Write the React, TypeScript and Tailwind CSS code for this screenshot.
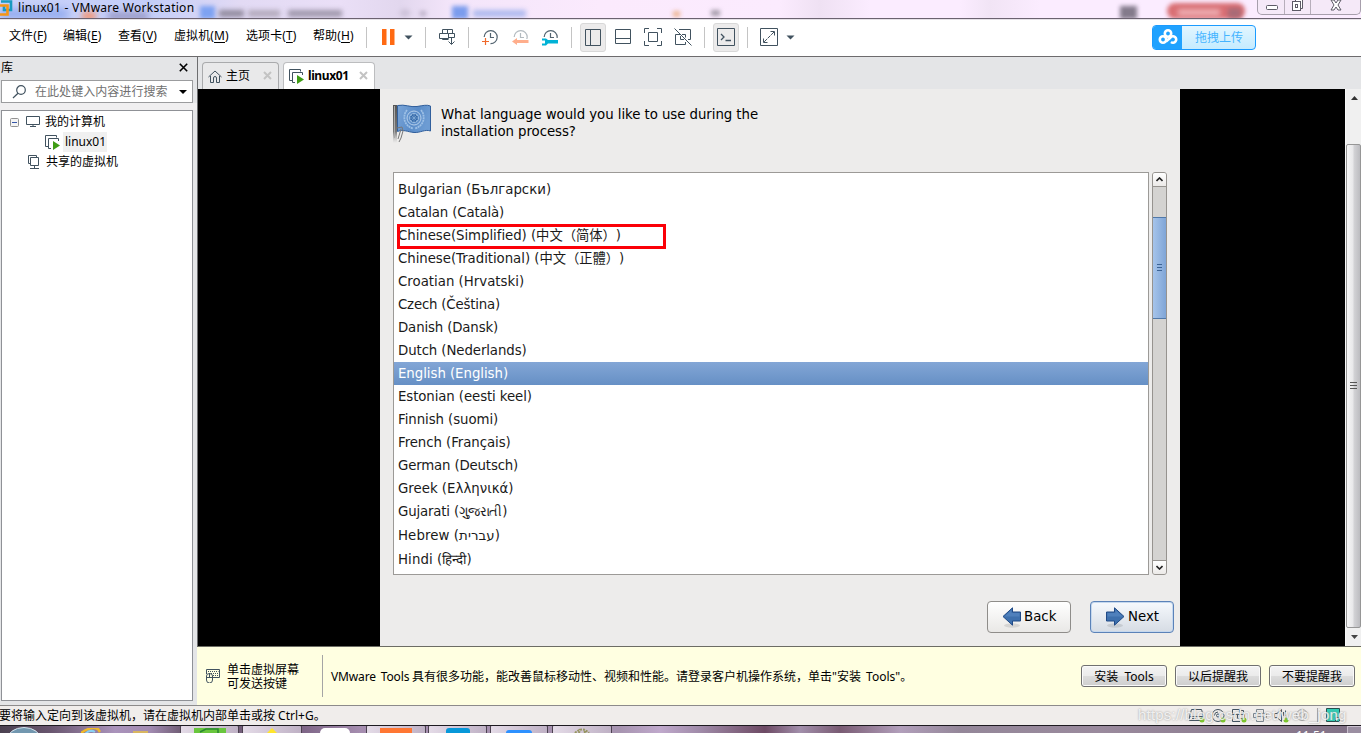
import type { ReactNode } from "react";

const UI = "font-['Noto_Sans','Noto_Sans_CJK_SC',sans-serif]";
const GUEST = "font-['DejaVu_Sans','Noto_Sans_CJK_SC',sans-serif]";

const INK = "#41525f";

const menus = [
  { label: "文件", key: "F", w: "w-[54px]" },
  { label: "编辑", key: "E", w: "w-[55px]" },
  { label: "查看", key: "V", w: "w-[56px]" },
  { label: "虚拟机", key: "M", w: "w-[72px]" },
  { label: "选项卡", key: "T", w: "w-[67px]" },
  { label: "帮助", key: "H", w: "w-[53px]" },
];

const languages = [
  { name: "Bulgarian (Български)", style: "h-[23px]" },
  { name: "Catalan (Català)", style: "h-[23px] tracking-[-0.15px]" },
  { name: "Chinese(Simplified) (中文（简体）)", style: "h-[23px] tracking-[-0.05px]" },
  { name: "Chinese(Traditional) (中文（正體）)", style: "h-[23px] tracking-[-0.05px]" },
  { name: "Croatian (Hrvatski)", style: "h-[23px]" },
  { name: "Czech (Čeština)", style: "h-[23px] tracking-[-0.2px]" },
  { name: "Danish (Dansk)", style: "h-[23px] tracking-[-0.15px]" },
  { name: "Dutch (Nederlands)", style: "h-[23px] tracking-[-0.1px]" },
  { name: "English (English)", style: "h-[23px] tracking-[-0.05px]" },
  { name: "Estonian (eesti keel)", style: "h-[23px] tracking-[-0.1px]" },
  { name: "Finnish (suomi)", style: "h-[23px] tracking-[-0.07px]" },
  { name: "French (Français)", style: "h-[23px] tracking-[-0.07px]" },
  { name: "German (Deutsch)", style: "h-[23px] tracking-[-0.17px]" },
  { name: "Greek (Ελληνικά)", style: "h-[23px]" },
  { name: "Gujarati (ગુજરાતી)", style: "h-[23px] tracking-[-0.17px]" },
  { name: "Hebrew (עברית)", style: "h-[24px] pt-px tracking-[0.08px]" },
  { name: "Hindi (हिन्दी)", style: "h-[24px] pt-px tracking-[0.08px]" },
];

function Icon({ w, h, className = "", children }: { w: number; h: number; className?: string; children: ReactNode }) {
  return (
    <svg width={w} height={h} viewBox={`0 0 ${w} ${h}`} className={`block shrink-0 ${className}`} fill="none" stroke={INK}>
      {children}
    </svg>
  );
}

function Separator({ className }: { className: string }) {
  return <div className={`h-[21px] w-px shrink-0 bg-[#c4c4c4] ${className}`} />;
}

function Caret({ className }: { className: string }) {
  return (
    <Icon w={9} h={5} className={className}>
      <path d="M0.5 0.5H8.5L4.5 4.5Z" fill={INK} stroke="none" />
    </Icon>
  );
}

function VmIcon({ className = "" }: { className?: string }) {
  return (
    <Icon w={15} h={15} className={className}>
      <path d="M11.5 2.5V0.5H0.5V11.5H3" />
      <path d="M13.5 6V3.5H3.5V13.5H6" />
      <path d="M8 6L15 10.5L8 15Z" fill="#3f9c14" stroke="none" />
    </Icon>
  );
}

function Clock({ color }: { color: string }) {
  return (
    <g stroke={color}>
      <path d="M2.2 8A6.5 6.5 0 1 1 8.5 14.6" strokeWidth="1.2" />
      <path d="M8.5 4V8.5H12" strokeWidth="1.2" />
    </g>
  );
}

function TitleBar() {
  return (
    <div className="relative flex h-[20px] shrink-0 overflow-hidden border-b border-[#e6e2e8] bg-[linear-gradient(90deg,#cbd3fa_0,#c3cdf8_150px,#e2daf4_240px,#eadff7_340px,#e2d7ee_400px,#f3e5fa_450px,#fbeafd_600px,#fbebfe_780px,#efe1f3_820px,#fbecff_870px,#fbecff_960px,#f1e4f5_990px,#fbecff_1040px,#fbecff_1361px)]">
      <div className="absolute left-0 top-[9px] h-[10px] w-[68px] bg-[#8fa8ee] blur-[4px]" />
      <div className="absolute left-[82px] top-[12px] h-[8px] w-[14px] bg-[#f5936f] blur-[3px]" />
      <div className="absolute left-[108px] top-[12px] h-[8px] w-[40px] bg-[#9a9bc8] blur-[3px]" />
      <div className="absolute left-[200px] top-[6px] h-[13px] w-[15px] bg-[#7ea2f2] blur-[2px]" />
      <div className="absolute left-[219px] top-[10px] h-[7px] w-[25px] bg-[#918a9d] blur-[2.5px]" />
      <div className="absolute left-[248px] top-[10px] h-[7px] w-[32px] bg-[#b3aabc] blur-[2.5px]" />
      <div className="absolute left-[288px] top-[10px] h-[7px] w-[54px] bg-[#9f97ab] blur-[2.5px]" />
      <div className="absolute left-[400px] top-[9px] h-[8px] w-[10px] rounded-full bg-[#cfc4da] blur-[2px]" />
      <div className="absolute left-[420px] top-[11px] h-[5px] w-[6px] bg-[#b9aec6] blur-[2px]" />
      <div className="absolute left-[452px] top-[6px] h-[13px] w-[16px] bg-[#7b9ced] blur-[2px]" />
      <div className="absolute left-[473px] top-[10px] h-[7px] w-[53px] bg-[#adb9ee] blur-[2.5px]" />
      <div className="absolute left-[673px] top-[11px] h-[6px] w-[7px] bg-[#eeb794] blur-[2px]" />
      <div className="absolute left-[711px] top-[10px] h-[6px] w-[9px] bg-[#a69dab] blur-[2px]" />
      <div className="absolute left-[1120px] top-[6px] h-[13px] w-[17px] bg-[#837a8b] blur-[2px]" />
      <div className="absolute left-[1167px] top-[3px] h-[16px] w-[78px] rounded-full bg-[#d96f74] blur-[2px]" />
      <div className="absolute left-[1178px] top-[9px] h-[7px] w-[42px] bg-[#edabb0] blur-[2.5px]" />
      <div className="absolute left-[1228px] top-[8px] h-[10px] w-[13px] bg-[#a96a76] blur-[2px]" />
      <Icon w={14} h={17} className="relative">
        <path d="M1 1.5H11V10H4V6" stroke="#1a9ac0" strokeWidth="2.6" />
        <path d="M-1 5.5H7.5V14.5H-1" stroke="#f59516" strokeWidth="2.6" />
      </Icon>
      <div className="relative ml-[4px] h-[17px] whitespace-nowrap text-[12px] leading-[15px] tracking-[0.28px] text-black">linux01 - VMware Workstation</div>
      <div className="relative ml-auto flex h-[15px] w-[104px] shrink-0 rounded-b-[5px] border border-t-0 border-[#a79fac] bg-[#f5e9f8]">
        <div className="flex w-[27px] justify-center border-r border-[#b7aebb] pl-px">
          <Icon w={12} h={14}>
            <rect x="0.5" y="5.5" width="11" height="4" rx="1" fill="#fff" stroke="#5d5a66" />
          </Icon>
        </div>
        <div className="flex w-[26px] justify-center border-r border-[#b7aebb]">
          <Icon w={12} h={14}>
            <path d="M3.5 1.5V-1H10.5V8.5H9" fill="#fff" stroke="#5d5a66" />
            <rect x="0.5" y="1.5" width="8" height="9" fill="#fff" stroke="#5d5a66" />
            <rect x="3.5" y="4.5" width="2" height="3" stroke="#5d5a66" />
          </Icon>
        </div>
        <div className="flex flex-1 pl-[19px]">
          <Icon w={12} h={14}>
            <path d="M1 0H4L6 3L8 0H11L8 5L11 10H8L6 7L4 10H1L4 5Z" fill="#fff" stroke="#5d5a66" />
          </Icon>
        </div>
      </div>
      <div className="absolute left-0 top-[18px] h-px w-full bg-[#6b6270]" />
    </div>
  );
}

function Toolbar() {
  return (
    <div className="flex h-[37px] shrink-0 items-center border-b border-[#6d6b6d] bg-white pb-[2px] pl-[9px]">
      {menus.map((m) => (
        <div key={m.key} className={`shrink-0 whitespace-nowrap pb-[2px] text-[12px] leading-[16px] tracking-[0.1px] text-black ${m.w}`}>
          {m.label}(<span className="underline underline-offset-2">{m.key}</span>)
        </div>
      ))}
      <Separator className="" />
      <Icon w={13} h={16} className="ml-[15px]">
        <path d="M0 0H4.5V16H0ZM8 0H12.5V16H8Z" fill="#ff6a13" stroke="none" />
      </Icon>
      <Caret className="ml-[9px]" />
      <Separator className="ml-[12px]" />
      <Icon w={18} h={18} className="ml-[13px]">
        <path d="M3.5 5.5V1.500H13.500V5.500M8.500 5.500V1.500M0.500 5.500H9.500V10.500H0.500ZM9.500 5.500H15.500V9.500H9.500M3.500 10.500V11.500H9.500M12.500 9.500V16M9.500 13.500L12.500 16.500L15.500 13.500" />
      </Icon>
      <Separator className="ml-[11px]" />
      <Icon w={17} h={17} className="ml-[13px]">
        <Clock color="#536470" />
        <path d="M4.500 8V16M0 12.500H9" stroke="#fff" strokeWidth="3" />
        <path d="M3.500 9V16M0 12.500H7" stroke="#f0692a" strokeWidth="1.200" />
      </Icon>
      <Icon w={17} h={17} className="ml-[13px]">
        <Clock color="#b3bbc0" />
        <path d="M0 10H17V17H0Z" fill="#fff" stroke="none" />
        <path d="M0 12.500L5 9V11H16.500V14H5V16Z" fill="#ffae8c" stroke="none" />
      </Icon>
      <Icon w={17} h={17} className="ml-[13px]">
        <Clock color="#536470" />
        <path d="M0 9H17V17H0Z" fill="#fff" stroke="none" />
        <path d="M0 9.500H4L6 11H16V14.500H6L4 16.500H0V14.500H3V11.500H0Z" fill="#00b2d6" stroke="none" />
      </Icon>
      <Separator className="ml-[12px]" />
      <div className="ml-[8px] flex h-[29px] w-[26px] shrink-0 items-center justify-center rounded-[3px] border border-[#d8d8d8] bg-[#ecebeb]">
        <Icon w={16} h={17}>
          <path d="M0.500 0.500H15.500V16.500H0.500ZM5.500 0.500V16.500" />
        </Icon>
      </div>
      <Icon w={16} h={16} className="ml-[9px]">
        <path d="M0.500 0.500H15.500V14.500H0.500ZM0.500 9.500H15.500" />
      </Icon>
      <Icon w={18} h={18} className="ml-[13px]">
        <path d="M0.500 5V0.500H5M13 0.500H17.500V5M17.500 13V17.500H13M5 17.500H0.500V13M4.500 4.500H13.500V13.500H4.500Z" />
      </Icon>
      <Icon w={18} h={18} className="ml-[12px]">
        <path d="M5 1.500H16.500V11.500H14M6.500 6.500H1.500V16.500H11.500V14M8 6.500H11.500V9.500M6.500 8V11.500H10M0.500 0.500L17.500 17.500" />
      </Icon>
      <Separator className="ml-[12px]" />
      <div className="ml-[8px] flex h-[29px] w-[26px] shrink-0 items-center justify-center rounded-[3px] border border-[#d8d8d8] bg-[#ecebeb]">
        <Icon w={18} h={18}>
          <path d="M0.500 0.500H17.500V17.500H0.500Z" />
          <path d="M4 6L7 9L4 12M8.500 12.500H14" strokeWidth="1.300" />
        </Icon>
      </div>
      <Separator className="ml-[8px]" />
      <Icon w={18} h={18} className="ml-[12px]">
        <path d="M0.500 0.500H17.500V17.500H0.500ZM10.500 3.500H14.500V7.500M3.500 10.500V14.500H7.500" />
        <path d="M14 4L4 14" strokeDasharray="4 1" />
      </Icon>
      <Caret className="ml-[8px]" />
      <div className="ml-auto mr-[105px] flex h-[25px] w-[104px] shrink-0 overflow-hidden rounded-[4px] border border-[#1b9bff] bg-gradient-to-b from-[#e2f6ff] to-[#c5ebff]">
        <div className="flex w-[29px] items-center justify-center bg-[#20a2ff]">
          <Icon w={20} h={18}>
            <g stroke="#fff" strokeWidth="2.600">
              <circle cx="10" cy="5.500" r="3.200" />
              <circle cx="5" cy="11.500" r="3.200" />
              <path d="M8 13.500L12.500 9.500A3.200 3.200 0 1 1 13 14" />
            </g>
          </Icon>
        </div>
        <div className="flex flex-1 items-center justify-center whitespace-nowrap pl-[1px] pt-[2px] text-[12px] text-[#45b4ff]">拖拽上传</div>
      </div>
    </div>
  );
}

function Library() {
  return (
    <div className="flex w-[197px] shrink-0 flex-col bg-[#e4e5e7] pb-[4px]">
      <div className="flex h-[23px] items-center justify-between pl-[1px] pr-[9px] text-[12px] text-black">
        <span className="pb-[2px]">库</span>
        <Icon w={9} h={9} className="mb-[2px]">
          <path d="M0.800 0.800L8.200 8.200M8.200 0.800L0.800 8.200" stroke="#000" strokeWidth="1.600" />
        </Icon>
      </div>
      <div className="ml-px flex h-[23px] w-[192px] items-center border border-[#9b9c9e] bg-white pl-[10px] pr-[5px]">
        <Icon w={15} h={14}>
          <circle cx="9" cy="5" r="4.300" strokeWidth="1.200" />
          <path d="M6 8.300L1 13" strokeWidth="1.200" />
        </Icon>
        <span className="ml-[8px] whitespace-nowrap text-[12px] leading-[18px] tracking-[0.05px] text-[#707070]">在此处键入内容进行搜索</span>
        <Icon w={8} h={4} className="ml-auto">
          <path d="M0 0H8L4 4Z" fill="#000" stroke="none" />
        </Icon>
      </div>
      <div className="h-[7px] bg-[#f0eff0]" />
      <div className="ml-px w-[192px] flex-1 border border-[#8f9196] bg-white text-[12px] text-black">
        <div className="flex h-[21px] items-center pl-[8px]">
          <Icon w={9} h={9} className="mt-[2px]">
            <rect x="0.500" y="0.500" width="8" height="8" rx="1" fill="#f4f4f4" stroke="#929292" />
            <path d="M2 4.500H7" stroke="#3556a8" />
          </Icon>
          <Icon w={14} h={12} className="ml-[7px] mt-px">
            <path d="M0.500 0.500H13.500V8.500H0.500ZM7 9V10M4 10.500H10" />
          </Icon>
          <span className="ml-[5px]">我的计算机</span>
        </div>
        <div className="flex h-[20px] items-center pl-[43px]">
          <VmIcon />
          <span className="ml-[3px] flex h-[20px] w-[44px] items-center bg-[#f0f0f0] pl-[2px]">linux01</span>
        </div>
        <div className="flex h-[20px] items-center pl-[26px]">
          <Icon w={13} h={14}>
            <path d="M3 8.500H0.500V0.500H8.500V2M2.500 2.500H10.500V10.500H2.500ZM6.500 10.500V13M2 13.500H11" />
          </Icon>
          <span className="ml-[5px]">共享的虚拟机</span>
        </div>
      </div>
    </div>
  );
}

function CloseMark({ className }: { className: string }) {
  return (
    <Icon w={9} h={9} className={className}>
      <path d="M1 1L8 8M8 1L1 8" stroke="#c3c3c3" strokeWidth="2" />
    </Icon>
  );
}

function Tabs() {
  return (
    <div className="flex h-[32px] shrink-0 items-end bg-[#e4e5e7] pl-[4px]">
      <div className="flex h-[27px] w-[77px] items-center rounded-t-[4px] border border-b-0 border-[#a9aaac] bg-[#e9e9ea] pl-[5px] text-[12px] text-black">
        <Icon w={14} h={14} className="mt-[2px]">
          <path d="M0.500 7L7 1L13.500 7M2.500 6V12.500H5.500V8A1.500 1.500 0 0 1 8.500 8V12.500H11.500V6" />
        </Icon>
        <span className="ml-[4px]">主页</span>
        <CloseMark className="mb-[2px] ml-auto mr-[6px]" />
      </div>
      <div className="ml-[4px] flex h-[27px] w-[92px] items-center rounded-t-[4px] border border-b-0 border-[#bcbdbf] bg-white pl-[5px] text-[12px] font-bold text-black">
        <VmIcon className="mt-px" />
        <span className="ml-[4px] tracking-[-0.400px]">linux01</span>
        <CloseMark className="mb-[2px] ml-auto mr-[6px]" />
      </div>
    </div>
  );
}

function Flag() {
  return (
    <svg width="40" height="40" viewBox="0 0 40 40" className="block shrink-0" fill="none">
      <defs>
        <linearGradient id="pole" x1="0" y1="0" x2="0" y2="1">
          <stop offset="0" stopColor="#555" />
          <stop offset="0.7" stopColor="#777" />
          <stop offset="1" stopColor="#aaa" stopOpacity="0" />
        </linearGradient>
        <linearGradient id="cloth" x1="0" y1="0" x2="1" y2="0.3">
          <stop offset="0" stopColor="#7aa5d8" />
          <stop offset="0.6" stopColor="#5a8cc8" />
          <stop offset="1" stopColor="#6d9cd3" />
        </linearGradient>
      </defs>
      <rect x="0" y="1" width="4" height="38" fill="url(#pole)" />
      <rect x="1" y="2" width="1" height="32" fill="#aaa" />
      <path d="M4.500 1.500C12 0 17 3.500 24 2.500C30 1.500 34 0.500 37.500 2V27C32 25 27 29 21 28.500C15 28 10 25 4.500 27.500Z" fill="url(#cloth)" stroke="#315f9c" />
      <circle cx="21" cy="14" r="7" stroke="#b5cfeb" />
      <circle cx="21" cy="14" r="4.500" fill="#3468a8" stroke="#9fc1e4" />
      <path d="M21 9V19M16 14H26M17.500 10.500L24.500 17.500M24.500 10.500L17.500 17.500" stroke="#8eb5de" strokeWidth="0.600" />
      <path d="M14 6C9 12 11 22 20 24.500M28 6C33 12 31 22 22 24.500" stroke="#9dc0e6" strokeWidth="1.800" strokeDasharray="2 0.600" />
      <path d="M4 24L9 23L10 27L8 34L6 38M8 25L5 35" stroke="#777" />
    </svg>
  );
}

function Arrow({ right = false }: { right?: boolean }) {
  return (
    <svg width="20" height="21" viewBox="0 0 20 21" className={`block shrink-0 ${right ? "-scale-x-100" : ""}`}>
      <ellipse cx="10" cy="18.500" rx="8" ry="2.200" fill="#000" opacity="0.100" />
      <path d="M1 9.500L10.500 0.800V5H18.500V14H10.500V18.200Z" fill="#3e70ad" stroke="#204a87" />
      <path d="M2.500 9.500L9.500 3V6H17.500V9.500Z" fill="#4f80bc" />
    </svg>
  );
}

function ListScrollbar() {
  return (
    <div className="ml-[3px] flex h-[403px] w-[15px] flex-col overflow-hidden rounded-[3px] border border-[#96938f] bg-[#d4d3d1]">
      <div className="flex h-[14px] shrink-0 items-center justify-center border-b border-[#96938f] bg-gradient-to-b from-white to-[#eceae8]">
        <Icon w={7} h={5}>
          <path d="M0.500 4L3.500 1L6.500 4" stroke="#222" strokeWidth="1.600" />
        </Icon>
      </div>
      <div className="-mx-px mt-[30px] flex h-[102px] shrink-0 items-center justify-center border border-[#5078a8] bg-[linear-gradient(90deg,#a6c4ea,#7fa5d7)] pb-px">
        <Icon w={5} h={7}>
          <path d="M0 0.500H5M0 3.500H5M0 6.500H5" stroke="#3c6496" />
        </Icon>
      </div>
      <div className="mt-auto flex h-[14px] shrink-0 items-center justify-center border-t border-[#96938f] bg-gradient-to-b from-white to-[#eceae8]">
        <Icon w={7} h={5}>
          <path d="M0.500 1L3.500 4L6.500 1" stroke="#222" strokeWidth="1.600" />
        </Icon>
      </div>
    </div>
  );
}

function Installer() {
  return (
    <div className={`flex w-[800px] shrink-0 flex-col bg-[#edeceb] text-[13.33px] text-[#1a1a1a] ${GUEST}`}>
      <div className="flex h-[83px] shrink-0 pl-[13px] pt-[15px]">
        <Flag />
        <p className="ml-[8px] mt-[2px] leading-[17px] tracking-[-0.06px] text-black">
          What language would you like to use during the
          <br />
          installation process?
        </p>
      </div>
      <div className="flex h-[403px] shrink-0 pl-[13px]">
        <div className="relative w-[756px] border border-[#9c9a97] bg-white pt-[5px]">
          {languages.map((l) => (
            <div
              key={l.name}
              className={`flex items-center whitespace-nowrap pl-[4px] leading-[22px] [text-spacing-trim:space-all] ${l.style} ${
                l.name.startsWith("English") ? "bg-gradient-to-b from-[#83a6d6] to-[#6690c5] text-white" : ""
              }`}
            >
              <span>{l.name}</span>
            </div>
          ))}
          <div className="absolute left-[3px] top-[51px] h-[25px] w-[269px] border-[3px] border-[#fb0007]" />
        </div>
        <ListScrollbar />
      </div>
      <div className="flex justify-end gap-[19px] pr-[6px] pt-[26px] text-black">
        <div className="flex h-[32px] w-[84px] items-center rounded-[4px] border border-[#8f8d8a] bg-gradient-to-b from-white to-[#e9e8e6] pl-[14px]">
          <Arrow />
          <span className="ml-[2px] pb-[1px]">Back</span>
        </div>
        <div className="flex h-[32px] w-[84px] items-center rounded-[4px] border border-[#5b82b8] bg-gradient-to-b from-[#f6f9fd] to-[#d6dce4] pl-[14px] shadow-[inset_0_0_0_1px_#c5d8ee]">
          <Arrow right />
          <span className="ml-[3px] pb-[1px]">Next</span>
        </div>
      </div>
    </div>
  );
}

function OuterScrollbar() {
  return (
    <div className="flex w-[16px] shrink-0 flex-col border-l border-[#f8f8f8] bg-[#f0f0f0]">
      <div className="flex h-[17px] items-center pl-[5px]">
        <Icon w={7} h={4}>
          <path d="M0 4L3.500 0L7 4Z" fill="#333" stroke="none" />
        </Icon>
      </div>
      <div className="mt-[38px] flex h-[484px] w-[15px] items-center justify-center rounded-[2px] border border-[#969696] bg-[linear-gradient(90deg,#f6f6f6_0%,#e8e8ea_45%,#d2d2d5_55%,#bcbcc0_100%)]">
        <Icon w={7} h={8}>
          <path d="M0 0.500H7M0 3.500H7M0 6.500H7" stroke="#555" />
        </Icon>
      </div>
      <div className="flex h-[18px] items-center pl-[5px]">
        <Icon w={7} h={4}>
          <path d="M0 0H7L3.500 4Z" fill="#444" stroke="none" />
        </Icon>
      </div>
    </div>
  );
}

function NoticeButton({ label }: { label: string }) {
  return (
    <div className="flex h-[22px] w-[86px] items-center justify-center whitespace-pre rounded-[3px] border border-[#707070] bg-[linear-gradient(180deg,#f3f3f3_0%,#ebebeb_48%,#dcdcdc_52%,#cecece_100%)] pt-px text-[12px] leading-[18px] text-black shadow-[inset_0_0_0_1px_#fafafa]">
      {label}
    </div>
  );
}

function Notice() {
  return (
    <div className="-ml-px flex h-[59px] shrink-0 items-center border-t border-[#6c6c64] bg-[#ffffe1] text-[12px] text-black">
      <Icon w={15} h={15} className="mb-px ml-[8px]">
        <path d="M1.500 6V1.500H14.500V9.500H8" />
        <path d="M3 3.500H13.500M4 5.500H13.500M8 7.500H13" strokeDasharray="1 1" />
        <path d="M1.500 8A3 2.500 0 0 1 7.500 8V12A3 3 0 0 1 1.500 12ZM1.500 9.500H7.500M4.500 5.500V9.500" />
      </Icon>
      <div className="ml-[7px] w-[95px] whitespace-nowrap pt-[2px] leading-[14px]">
        单击虚拟屏幕
        <br />
        可发送按键
      </div>
      <div className="h-[42px] w-px bg-[#a5a5a5]" />
      <div className="ml-[8px] whitespace-nowrap pt-[2px]">
        <span className="inline-block w-[81px] whitespace-nowrap tracking-[-0.15px] [word-spacing:2px]">VMware Tools</span>
        具有很多功能，能改善鼠标移动性、视频和性能。请登录客户机操作系统，单击
        <span className="font-['Noto_Sans',sans-serif]">"</span>安装 <span className="ml-[2px]">Tools</span>
        <span className="font-['Noto_Sans',sans-serif]">"</span>。
      </div>
      <div className="ml-auto mr-[6px] flex gap-[8px]">
        <NoticeButton label="安装  Tools" />
        <NoticeButton label="以后提醒我" />
        <NoticeButton label="不要提醒我" />
      </div>
    </div>
  );
}

function Dot({ x = 12, y = 12 }: { x?: number; y?: number }) {
  return <circle cx={x} cy={y} r="2.500" fill="#7bc829" stroke="none" />;
}

function StatusBar() {
  return (
    <div className="relative flex h-[20px] shrink-0 items-center border-t border-[#8d8b8b] bg-[#f0edeb] text-[12px] text-black">
      <span className="-ml-[1px] whitespace-nowrap pt-px">要将输入定向到该虚拟机，请在虚拟机内部单击或按 Ctrl+G。</span>
      <div className="ml-auto mr-[20px] flex items-center">
        <Icon w={16} h={15}>
          <path d="M2.500 1.500H12.500L14.500 8.500V12.500H0.500V8.500ZM0.500 8.500H14.500M3 10.500H7" />
          <Dot x={13} />
        </Icon>
        <Icon w={15} h={15} className="ml-[6px]">
          <circle cx="7" cy="7.500" r="6" />
          <circle cx="7" cy="7.500" r="1.500" />
          <path d="M3.500 7.500A3.500 3.500 0 0 1 7 4" />
          <Dot />
        </Icon>
        <Icon w={15} h={15} className="ml-[6px]">
          <path d="M0.500 1.500H7.500V6.500H0.500ZM5.500 6.500H12.500V10.500H5.500ZM9 2.500H11.500V6M0.500 9V13.500H8" />
          <Dot />
        </Icon>
        <Icon w={15} h={15} className="ml-[6px]">
          <path d="M3.500 5V1.500H10.500V5M3.500 9.500H0.500V5.500H13.500V9.500H10.500M3.500 8.500H10.500V13.500H3.500Z" stroke="#7b868e" />
        </Icon>
        <Icon w={15} h={15} className="ml-[6px]">
          <path d="M0.500 5.500H3L7.500 1.500V13.500L3 9.500H0.500ZM9.500 4V8M11.500 2.500V8" />
          <Dot />
        </Icon>
        <Icon w={15} h={15} className="ml-[6px]">
          <circle cx="7" cy="7" r="5.500" stroke="#a6a6a6" />
          <circle cx="7" cy="7" r="2.500" stroke="#a6a6a6" />
        </Icon>
        <div className="ml-[7px] h-[15px] w-px bg-[#a6a6a6]" />
        <Icon w={15} h={15} className="ml-[8px]">
          <path d="M0.500 0.500H13.500V13.500H0.500Z" fill="#30cdb5" stroke="#27514e" />
          <path d="M9.500 13.500V9.500H13.500" fill="#f0edeb" stroke="#27514e" />
        </Icon>
      </div>
      <div className="absolute left-[1138px] top-0 whitespace-nowrap font-['Liberation_Sans',sans-serif] text-[15px] leading-[18px] tracking-[0.2px] text-white/80 [text-shadow:0_0_2px_#8a8a8a]">
        https://blog.csdn.net/web_jong
      </div>
    </div>
  );
}

function Task({ w, ml, children }: { w: string; ml: string; children: ReactNode }) {
  return (
    <div className={`flex h-[8px] shrink-0 items-end justify-center overflow-hidden rounded-t-[2px] border border-b-0 border-[#4c4250] bg-gradient-to-r from-[#e4dbe7] to-[#bfb1c5] ${w} ${ml}`}>
      {children}
    </div>
  );
}

function Taskbar() {
  return (
    <div className="relative flex h-[8px] shrink-0 items-end overflow-hidden border-t border-[#1d1a20] bg-[linear-gradient(90deg,#4b4150_0,#68556e_50px,#aa93bb_115px,#a28bb1_150px,#6a586e_185px,#7c6385_300px,#a58daf_360px,#a794b0_620px,#c0a9cc_660px,#a08ba9_700px,#6d4a64_765px,#a28fab_800px,#795b73_840px,#b29fbb_900px,#948799_960px,#9a8a9d_1100px,#817186_1361px)]">
      <Icon w={32} h={6} className="ml-[8px]">
        <ellipse cx="16" cy="13" rx="17" ry="12.500" fill="#7297af" stroke="#d6e4ed" />
      </Icon>
      <Icon w={20} h={5} className="ml-[41px]">
        <path d="M0 5Q10 -2 17 1L19 4" stroke="#f0b928" strokeWidth="2.500" />
        <path d="M4 6Q9 1 14 4" stroke="#8bd1f3" strokeWidth="2" />
      </Icon>
      <div className="ml-[32px] h-[2px] w-[15px] shrink-0 bg-[#d8b660]" />
      <Task w="w-[59px]" ml="ml-[32px]">
        <Icon w={32} h={5}>
          <path d="M0 0H32V5H0Z" fill="#69c63d" stroke="none" />
          <path d="M6 4L12 1H24V5" stroke="#298730" strokeWidth="1.500" />
        </Icon>
      </Task>
      <Task w="w-[60px]" ml="ml-[3px]">
        <Icon w={10} h={5}>
          <path d="M0 5L5 0L10 5Z" fill="#ffe52c" stroke="none" />
        </Icon>
      </Task>
      <div className="ml-[18px] h-[5px] w-[30px] shrink-0 rounded-t-[5px] bg-white" />
      <Task w="w-[60px]" ml="ml-[16px]">
        <div className="h-[5px] w-[32px] bg-[#ff7733]" />
      </Task>
      <Task w="w-[59px]" ml="ml-[2px]">
        <div className="h-[5px] w-[24px] rounded-t-[3px] bg-[#0798d9]" />
      </Task>
      <Task w="w-[58px]" ml="ml-[3px]">
        <div className="h-[3px] w-[26px] rounded-t-[3px] bg-[#2d91ff]" />
      </Task>
      <Task w="w-[60px]" ml="ml-[4px]">
        <Icon w={16} h={5}>
          <path d="M1 5Q8 -2 15 5M5 5L6 1M11 5L10 1" stroke="#969560" strokeWidth="2" strokeDasharray="2 1" />
        </Icon>
      </Task>
      <div className="absolute left-[1296px] top-[4px] whitespace-nowrap text-[12px] leading-[12px] text-white">11:51</div>
      <div className="ml-auto h-[7px] w-[14px] shrink-0 border-l border-t border-[#cac0ce] bg-[#9b8fa2]" />
    </div>
  );
}

export default function App() {
  return (
    <div className={`flex h-[733px] w-[1361px] flex-col overflow-hidden bg-[#e4e5e7] ${UI}`}>
      <TitleBar />
      <Toolbar />
      <div className="flex h-[648px] shrink-0">
        <Library />
        <div className="flex w-[1164px] flex-col border-l border-[#6d6e70]">
          <Tabs />
          <div className="flex h-[557px] shrink-0 bg-black pl-[182px]">
            <Installer />
            <div className="flex-1" />
            <OuterScrollbar />
          </div>
          <Notice />
        </div>
      </div>
      <StatusBar />
      <Taskbar />
    </div>
  );
}
